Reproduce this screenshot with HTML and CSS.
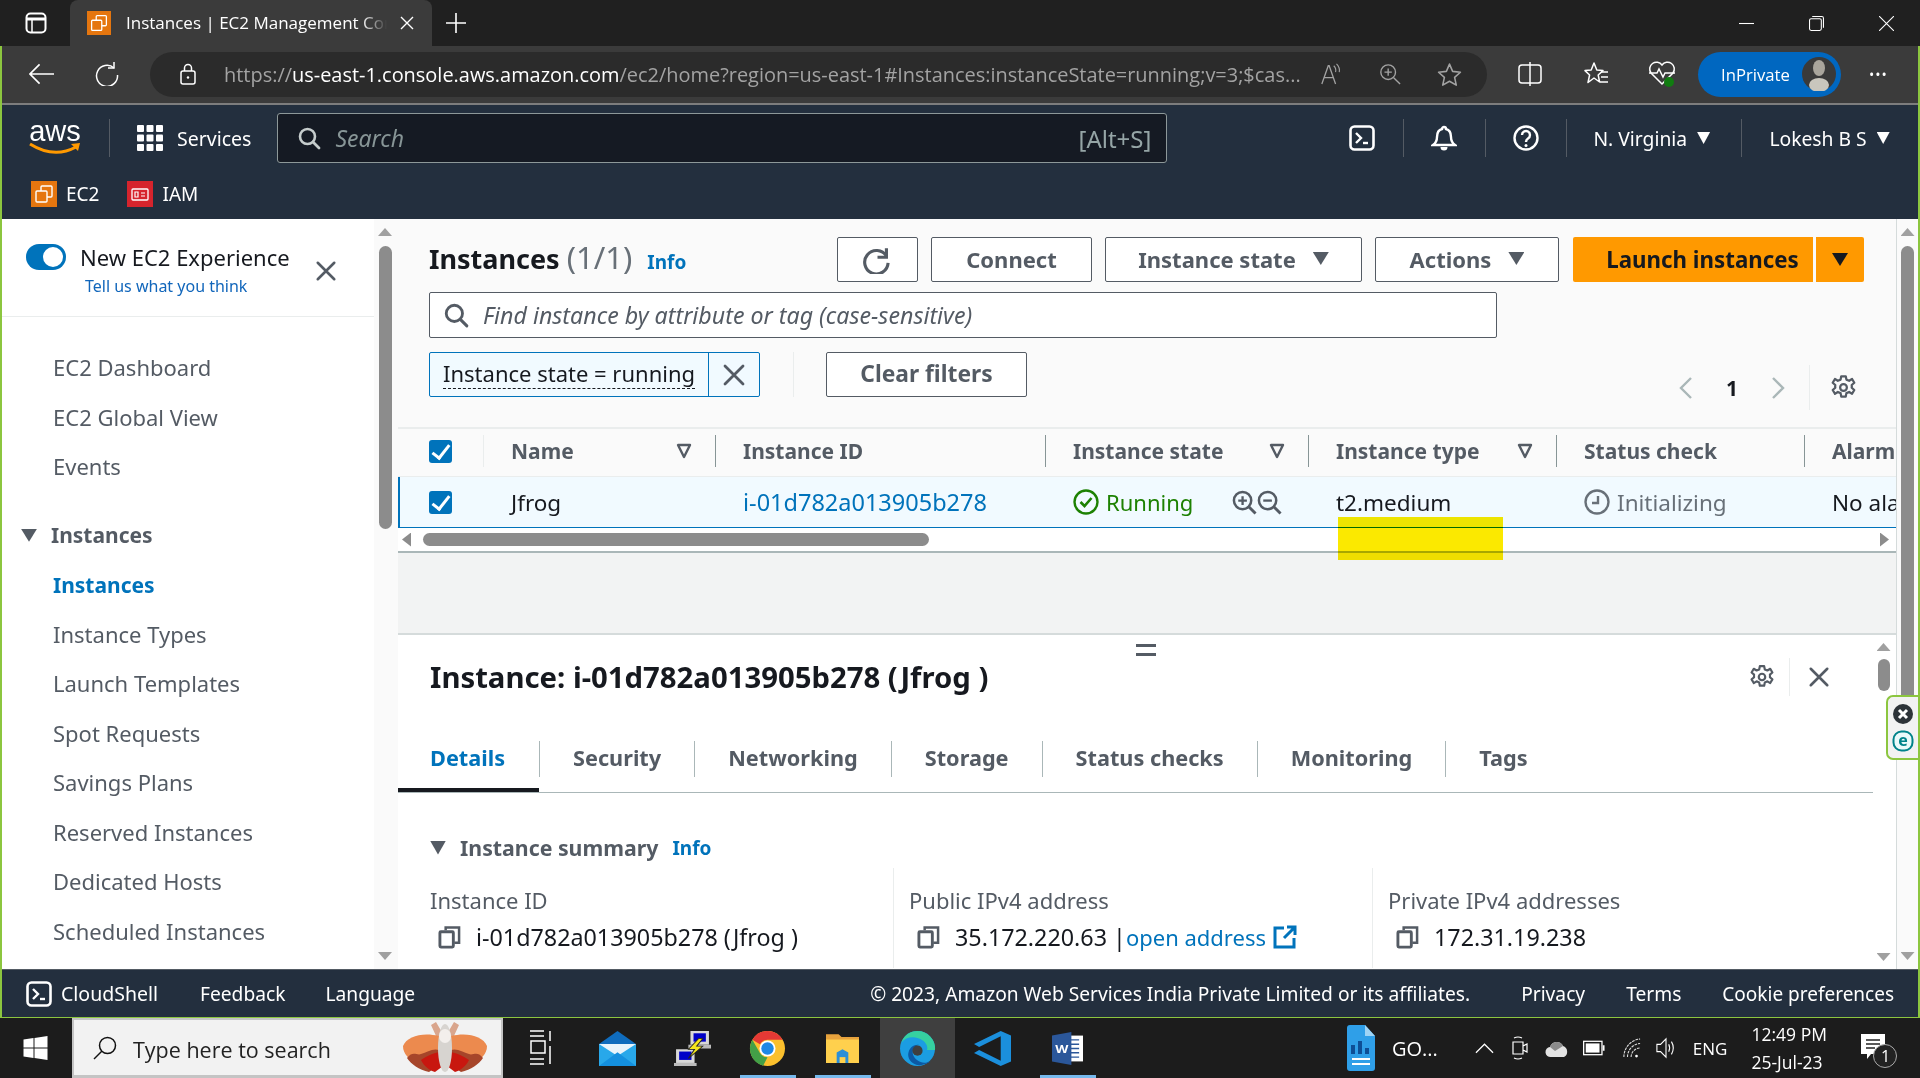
FILE: index.html
```html
<!DOCTYPE html>
<html lang="en">
<head>
    <meta charset="UTF-8">
    <title>Instances | EC2 Management Console</title>
    <link rel="stylesheet" href="styles.css">
</head>
<body>
    <svg class="sprite" xmlns="http://www.w3.org/2000/svg">
        <symbol id="i-ec2" viewBox="0 0 26 26">
            <rect width="26" height="26" fill="#e5760f"/>
            <rect x="10" y="5" width="11" height="11" rx="1" fill="none" stroke="#fff" stroke-width="1.4"/>
            <rect x="5" y="10" width="11" height="11" rx="1" fill="#e5760f" stroke="#fff" stroke-width="1.4"/>
        </symbol>
        <symbol id="i-search" viewBox="0 0 24 24">
            <circle cx="10.5" cy="10.5" r="7.5" fill="none" stroke="currentColor" stroke-width="2.6"/>
            <path d="M16 16l6 6" stroke="currentColor" stroke-width="2.8" stroke-linecap="round"/>
        </symbol>
        <symbol id="i-gear" viewBox="0 0 24 24">
            <path d="M10 2h4l.6 3 2.4 1 2.6-1.6 2 3.4-2.3 2a7 7 0 0 1 0 2.4l2.3 2-2 3.4-2.6-1.6-2.4 1-.6 3h-4l-.6-3-2.4-1-2.6 1.6-2-3.4 2.3-2a7 7 0 0 1 0-2.4l-2.3-2 2-3.4L7 6l2.4-1z" fill="none" stroke="currentColor" stroke-width="2" stroke-linejoin="round"/>
            <circle cx="12" cy="12" r="3" fill="none" stroke="currentColor" stroke-width="2"/>
        </symbol>
        <symbol id="i-close" viewBox="0 0 24 24">
            <path d="M3 3l18 18M21 3L3 21" stroke="currentColor" stroke-width="2.8" stroke-linecap="round"/>
        </symbol>
        <symbol id="i-copy" viewBox="0 0 24 24">
            <path d="M8 5V2h14v16h-5" fill="none" stroke="currentColor" stroke-width="2.6"/>
            <rect x="2" y="6.5" width="14" height="16" rx="1" fill="none" stroke="currentColor" stroke-width="3"/>
        </symbol>
        <symbol id="i-shell" viewBox="0 0 26 26">
            <rect x="1.5" y="1.5" width="23" height="23" rx="4" fill="none" stroke="#fff" stroke-width="2.6"/>
            <path d="M7 8l5 5-5 5" fill="none" stroke="#fff" stroke-width="2.4"/>
            <path d="M14 18h5" stroke="#fff" stroke-width="2.4"/>
        </symbol>
        <symbol id="i-filter" viewBox="0 0 16 16">
            <path d="M2 2h12l-6 12z" fill="none" stroke="#545b64" stroke-width="2.4" stroke-linejoin="round"/>
        </symbol>
    </svg>

    <div class="tabstrip">
        <svg class="tab-panel-icon" viewBox="0 0 22 22"><rect x="1.5" y="1.5" width="19" height="19" rx="4" fill="none" stroke="#fff" stroke-width="2"/><path d="M2 7h18" stroke="#fff" stroke-width="3"/><path d="M7 7v13" stroke="#fff" stroke-width="1.5"/></svg>
        <div class="tab">
            <svg class="tab-favicon"><use href="#i-ec2"/></svg>
            <span class="tab-title">Instances | EC2 Management Console</span>
            <svg class="tab-close" viewBox="0 0 14 14"><path d="M1 1l12 12M13 1L1 13" stroke="#fff" stroke-width="1.4"/></svg>
        </div>
        <svg class="tab-new" viewBox="0 0 22 22"><path d="M11 1v20M1 11h20" stroke="#fff" stroke-width="1.6"/></svg>
        <div class="win-controls">
            <svg viewBox="0 0 14 14"><path d="M0 7h14" stroke="#fff"/></svg>
            <svg viewBox="0 0 14 14"><rect x=".5" y="2.5" width="11" height="11" rx="1.5" fill="none" stroke="#fff"/><path d="M3 .5h9a1.5 1.5 0 0 1 1.5 1.5v9" fill="none" stroke="#fff"/></svg>
            <svg viewBox="0 0 14 14"><path d="M0 0l14 14M14 0L0 14" stroke="#fff"/></svg>
        </div>
    </div>

    <div class="frame">
        <div class="toolbar">
            <svg class="tool-back" viewBox="0 0 26 22"><path d="M11 1L1 11l10 10M1 11h25" fill="none" stroke="#fff" stroke-width="1.7"/></svg>
            <svg class="tool-reload" viewBox="0 0 24 24"><path d="M19 0v6h-6" fill="none" stroke="#fff" stroke-width="1.5"/><path d="M19 6A10.500 10.500 0 1 0 22.500 13" fill="none" stroke="#fff" stroke-width="1.5"/></svg>
            <div class="addressbar">
                <svg class="addr-lock" viewBox="0 0 16 22"><rect x="1" y="8" width="14" height="13" rx="2" fill="none" stroke="#fff" stroke-width="1.5"/><path d="M4.5 8V5a3.5 3.5 0 0 1 7 0v3" fill="none" stroke="#fff" stroke-width="1.5"/><circle cx="8" cy="14.5" r="1.2" fill="#fff"/></svg>
                <span class="addr-url">https://<b>us-east-1.console.aws.amazon.com</b>/ec2/home?region=us-east-1#Instances:instanceState=running;v=3;$cas...</span>
                <svg class="addr-read" viewBox="0 0 24 24"><path d="M2 23L9 3h1l7 20M5 16h10" fill="none" stroke="#a3a3a3" stroke-width="1.4"/><path d="M15 3q3 3 2 7M18 1q4 4 3 9" fill="none" stroke="#a3a3a3" stroke-width="1.2"/></svg>
                <svg class="addr-zoom" viewBox="0 0 24 24"><circle cx="10" cy="10" r="8" fill="none" stroke="#a3a3a3" stroke-width="1.5"/><path d="M16 16l7 7M10 6v8M6 10h8" stroke="#a3a3a3" stroke-width="1.5"/></svg>
                <svg class="addr-star" viewBox="0 0 24 24"><path d="M12 2l3 7 7.500 .8-5.600 5 1.600 7.400L12 18.500l-6.500 3.700 1.600-7.400-5.600-5L9 9z" fill="none" stroke="#a3a3a3" stroke-width="1.5" stroke-linejoin="round"/></svg>
            </div>
            <svg class="tool-split" viewBox="0 0 24 24"><rect x="1" y="3" width="22" height="18" rx="3" fill="none" stroke="#fff" stroke-width="1.5"/><path d="M12 0v24" stroke="#fff" stroke-width="1.5"/></svg>
            <svg class="tool-fav" viewBox="0 0 26 26"><path d="M11 2l2.800 7 6.200 .6-4.800 4.400 1.400 7L11 17l-6 4.500 1.600-7.500L2 9.600 8.200 9z" fill="none" stroke="#fff" stroke-width="1.500" stroke-linejoin="round"/><path d="M18 11h7M18 16h7M17 21h8" stroke="#fff" stroke-width="1.500"/></svg>
            <svg class="tool-health" viewBox="0 0 28 28"><path d="M14 24L3 13a6.500 6.500 0 0 1 11-8 6.500 6.500 0 0 1 11 8z" fill="none" stroke="#fff" stroke-width="1.500"/><path d="M1 13h8l2-4 4 8 2-4h10" fill="none" stroke="#fff" stroke-width="1.500"/><circle cx="21" cy="22" r="5" fill="#107c10"/></svg>
            <div class="inprivate">
                <span>InPrivate</span>
                <svg class="avatar" viewBox="0 0 34 34"><circle cx="17" cy="17" r="17" fill="#3a3a3a"/><ellipse cx="17" cy="11" rx="6" ry="8" fill="#a9a59c"/><ellipse cx="17" cy="28" rx="10" ry="7" fill="#c9c6bd"/></svg>
            </div>
            <span class="tool-more">&#8226;&#8226;&#8226;</span>
        </div>

        <header class="aws-header">
            <div class="aws-nav">
                <div class="aws-logo">
                    <span>aws</span>
                    <svg viewBox="0 0 52 14"><path d="M1 2q24 15 46 3" fill="none" stroke="#f90" stroke-width="3"/><path d="M42 2l9-1-2 8z" fill="#f90"/></svg>
                </div>
                <span class="nav-sep sep-logo"></span>
                <svg class="grid-icon" viewBox="0 0 26 26"><g fill="#fff"><rect width="7" height="7" rx="1"/><rect x="9.500" width="7" height="7" rx="1"/><rect x="19" width="7" height="7" rx="1"/><rect y="9.500" width="7" height="7" rx="1"/><rect x="9.500" y="9.500" width="7" height="7" rx="1"/><rect x="19" y="9.500" width="7" height="7" rx="1"/><rect y="19" width="7" height="7" rx="1"/><rect x="9.500" y="19" width="7" height="7" rx="1"/><rect x="19" y="19" width="7" height="7" rx="1"/></g></svg>
                <span class="services">Services</span>
                <div class="aws-search">
                    <svg class="aws-search-icon"><use href="#i-search"/></svg>
                    <span class="aws-search-text">Search</span>
                    <span class="aws-search-key">[Alt+S]</span>
                </div>
                <svg class="nav-icon shell-icon"><use href="#i-shell"/></svg>
                <span class="nav-sep"></span>
                <svg class="nav-icon bell-icon" viewBox="0 0 26 26"><path d="M13 2a2 2 0 0 1 2 2c4 1 5 4 5 8 0 4 1 6 4 8H2c3-2 4-4 4-8 0-4 1-7 5-8a2 2 0 0 1 2-2z" fill="none" stroke="#fff" stroke-width="2.400"/><path d="M9.500 22a3.500 3.500 0 0 0 7 0z" fill="#fff"/></svg>
                <span class="nav-sep"></span>
                <svg class="nav-icon help-icon" viewBox="0 0 26 26"><circle cx="13" cy="13" r="11.500" fill="none" stroke="#fff" stroke-width="2.400"/><path d="M9 10a4 4 0 1 1 6 3.500c-1.500 1-2 1.500-2 3.500" fill="none" stroke="#fff" stroke-width="2.400"/><circle cx="13" cy="20.500" r="1.500" fill="#fff"/></svg>
                <span class="nav-sep"></span>
                <span class="nav-menu region">N. Virginia<i class="tri tri-white"></i></span>
                <span class="nav-sep"></span>
                <span class="nav-menu account">Lokesh B S<i class="tri tri-white"></i></span>
            </div>
            <div class="aws-favs">
                <svg class="fav-icon"><use href="#i-ec2"/></svg>
                <span class="fav-ec2">EC2</span>
                <svg class="fav-icon" viewBox="0 0 26 26"><rect width="26" height="26" fill="#d6242d"/><rect x="5" y="8" width="16" height="11" rx="1" fill="none" stroke="#fff" stroke-width="1.300"/><path d="M8 11h3v5H8zM14 12h4M14 15h4" fill="none" stroke="#fff" stroke-width="1.200"/></svg>
                <span>IAM</span>
            </div>
        </header>

        <main class="console">
            <aside class="sidebar">
                <div class="side-panel">
                    <div class="side-head">
                        <div class="side-exp">
                            <span class="toggle"></span>
                            <span class="side-exp-title">New EC2 Experience</span>
                            <svg class="side-close"><use href="#i-close"/></svg>
                        </div>
                        <a class="side-feedback">Tell us what you think</a>
                    </div>
                    <ul class="side-nav">
                        <li>EC2 Dashboard</li>
                        <li>EC2 Global View</li>
                        <li>Events</li>
                        <li class="side-group"><i class="tri tri-gray"></i>Instances</li>
                        <li class="side-active">Instances</li>
                        <li>Instance Types</li>
                        <li>Launch Templates</li>
                        <li>Spot Requests</li>
                        <li>Savings Plans</li>
                        <li>Reserved Instances</li>
                        <li>Dedicated Hosts</li>
                        <li>Scheduled Instances</li>
                    </ul>
                </div>
                <div class="vbar side-bar">
                    <i class="arrow-up"></i>
                    <span class="vthumb"></span>
                    <i class="arrow-down"></i>
                </div>
            </aside>

            <section class="content">
                <div class="list-pane">
                    <div class="list-controls">
                        <div class="list-head">
                            <h1>Instances <span class="count">(1/1)</span> <a class="info">Info</a></h1>
                            <div class="actions">
                                <button class="btn btn-refresh"><svg viewBox="0 0 26 26"><path d="M21 3v8h-8" fill="none" stroke="#545b64" stroke-width="2.800"/><path d="M21 10a10.500 10.500 0 1 0 1.500 6" fill="none" stroke="#545b64" stroke-width="2.800"/></svg></button>
                                <button class="btn btn-connect">Connect</button>
                                <button class="btn btn-state">Instance state<i class="tri tri-gray"></i></button>
                                <button class="btn btn-actions">Actions<i class="tri tri-gray"></i></button>
                                <div class="launch">
                                    <button class="btn-launch">Launch instances</button>
                                    <button class="btn-launch-more"><i class="tri tri-dark"></i></button>
                                </div>
                            </div>
                        </div>
                        <div class="find">
                            <svg><use href="#i-search"/></svg>
                            <span>Find instance by attribute or tag (case-sensitive)</span>
                        </div>
                        <div class="filters">
                            <div class="token">
                                <span class="token-label"><u>Instance state = running</u></span>
                                <span class="token-x"><svg><use href="#i-close"/></svg></span>
                            </div>
                            <span class="filters-sep"></span>
                            <button class="btn btn-clear">Clear filters</button>
                            <div class="pager">
                                <svg viewBox="0 0 16 24"><path d="M13 2L3 12l10 10" fill="none" stroke="#aab7b8" stroke-width="2.400"/></svg>
                                <b>1</b>
                                <svg viewBox="0 0 16 24"><path d="M3 2l10 10L3 22" fill="none" stroke="#aab7b8" stroke-width="2.400"/></svg>
                                <span class="pager-sep"></span>
                                <svg class="pager-gear"><use href="#i-gear"/></svg>
                            </div>
                        </div>
                    </div>
                    <div class="table-wrap">
                        <div class="table-row table-head">
                            <div class="cell cell-check"><span class="check"></span></div>
                            <div class="cell">Name<svg class="col-filter"><use href="#i-filter"/></svg></div>
                            <div class="cell">Instance ID</div>
                            <div class="cell">Instance state<svg class="col-filter"><use href="#i-filter"/></svg></div>
                            <div class="cell">Instance type<svg class="col-filter"><use href="#i-filter"/></svg></div>
                            <div class="cell">Status check</div>
                            <div class="cell">Alarm status</div>
                        </div>
                        <div class="table-row table-body">
                            <div class="cell cell-check"><span class="check"></span></div>
                            <div class="cell">Jfrog</div>
                            <div class="cell"><a class="link id-link">i-01d782a013905b278</a></div>
                            <div class="cell state-cell">
                                <svg class="status-icon" viewBox="0 0 26 26"><circle cx="13" cy="13" r="11.500" fill="none" stroke="#1d8102" stroke-width="2.400"/><path d="M7.500 13l4 4 7-8" fill="none" stroke="#1d8102" stroke-width="2.600"/></svg>
                                <span class="running">Running</span>
                                <svg class="zoom-in" viewBox="0 0 26 26"><circle cx="11" cy="11" r="9" fill="none" stroke="#545b64" stroke-width="2.600"/><path d="M17.500 17.500l7 7" stroke="#545b64" stroke-width="3"/><path d="M11 6.500v9M6.500 11h9" stroke="#545b64" stroke-width="2.400"/></svg>
                                <svg class="zoom-out" viewBox="0 0 26 26"><circle cx="11" cy="11" r="9" fill="none" stroke="#545b64" stroke-width="2.600"/><path d="M17.500 17.500l7 7" stroke="#545b64" stroke-width="3"/><path d="M6.500 11h9" stroke="#545b64" stroke-width="2.400"/></svg>
                            </div>
                            <div class="cell">t2.medium</div>
                            <div class="cell muted">
                                <svg class="status-icon" viewBox="0 0 26 26"><circle cx="13" cy="13" r="11.500" fill="none" stroke="#687078" stroke-width="2.400"/><path d="M14 7v7H8" fill="none" stroke="#687078" stroke-width="2.400"/></svg>
                                Initializing
                            </div>
                            <div class="cell">No alarms</div>
                        </div>
                        <div class="hscroll">
                            <i class="arrow-left"></i>
                            <span class="hthumb"></span>
                            <i class="arrow-right"></i>
                        </div>
                    </div>
                    <span class="scribble"></span>
                </div>

                <div class="split-pane">
                    <div class="split-main">
                        <div class="split-handle"></div>
                        <div class="split-head">
                            <h2>Instance: i-01d782a013905b278 (Jfrog )</h2>
                            <svg class="split-gear"><use href="#i-gear"/></svg>
                            <span class="split-sep"></span>
                            <svg class="split-close"><use href="#i-close"/></svg>
                        </div>
                        <nav class="tabs">
                            <a class="tab-item tab-active">Details</a>
                            <a class="tab-item">Security</a>
                            <a class="tab-item">Networking</a>
                            <a class="tab-item">Storage</a>
                            <a class="tab-item">Status checks</a>
                            <a class="tab-item">Monitoring</a>
                            <a class="tab-item">Tags</a>
                        </nav>
                        <div class="summary-title"><i class="tri tri-gray"></i><b>Instance summary</b><a class="info">Info</a></div>
                        <div class="summary">
                            <div class="field">
                                <span class="field-label">Instance ID</span>
                                <span class="field-value"><svg><use href="#i-copy"/></svg>i-01d782a013905b278 (Jfrog )</span>
                            </div>
                            <div class="field">
                                <span class="field-label">Public IPv4 address</span>
                                <span class="field-value"><svg><use href="#i-copy"/></svg>35.172.220.63 |<a class="link">open address</a>
                                    <svg class="ext-icon" viewBox="0 0 24 24"><path d="M11 3H2v19h19v-9" fill="none" stroke="#0073bb" stroke-width="3"/><path d="M14 2h8v8M22 2L11 13" fill="none" stroke="#0073bb" stroke-width="3"/></svg>
                                </span>
                            </div>
                            <div class="field">
                                <span class="field-label">Private IPv4 addresses</span>
                                <span class="field-value"><svg><use href="#i-copy"/></svg>172.31.19.238</span>
                            </div>
                        </div>
                    </div>
                    <div class="vbar split-bar">
                        <i class="arrow-up"></i>
                        <span class="vthumb"></span>
                        <i class="arrow-down"></i>
                    </div>
                </div>
            </section>

            <div class="vbar page-bar">
                <i class="arrow-up"></i>
                <span class="vthumb"></span>
                <i class="arrow-down"></i>
            </div>

            <div class="ext-tab">
                <svg viewBox="0 0 22 22"><circle cx="11" cy="11" r="10" fill="#2d3338"/><path d="M7 7l8 8M15 7l-8 8" stroke="#fff" stroke-width="3"/></svg>
                <svg viewBox="0 0 22 22"><rect x="1.500" y="1.500" width="19" height="19" rx="8" fill="#eafafa" stroke="#00838a" stroke-width="2"/><text x="11" y="16" text-anchor="middle" font-size="16" font-weight="700" font-family="Noto Sans" fill="#00838a">e</text></svg>
            </div>
        </main>

        <footer class="aws-footer">
            <svg class="foot-shell"><use href="#i-shell"/></svg>
            <span class="foot-cloud">CloudShell</span>
            <span class="foot-feedback">Feedback</span>
            <span class="foot-lang">Language</span>
            <span class="foot-copy">&copy; 2023, Amazon Web Services India Private Limited or its affiliates.</span>
            <span class="foot-privacy">Privacy</span>
            <span class="foot-terms">Terms</span>
            <span class="foot-cookie">Cookie preferences</span>
        </footer>
    </div>

    <div class="taskbar">
        <svg class="start" viewBox="0 0 24 24"><path d="M0 3.500L10 2v9.500H0zM11 1.900L24 0v11.500H11zM0 12.500h10V22L0 20.500zM11 12.500h13V24l-13-1.900z" fill="#fff"/></svg>
        <div class="task-search">
            <svg viewBox="0 0 24 24"><circle cx="14.500" cy="9.500" r="8" fill="none" stroke="#111" stroke-width="1.500"/><path d="M9 15l-8 8" stroke="#111" stroke-width="1.500"/></svg>
            <span>Type here to search</span>
            <svg class="moth" viewBox="0 0 84 52">
                <path d="M40 12L33 0l-5 3 6 13zM44 12l7-12 5 3-6 13z" fill="#d9a58c"/>
                <path d="M36 14C20 10 4 14 0 24c0 8 6 14 14 16 10-2 20-8 24-14z" fill="#ec8a4e"/>
                <path d="M48 14c16-4 32 0 36 10 0 8-6 14-14 16-10-2-20-8-24-14z" fill="#ec8a4e"/>
                <path d="M4 36c6-8 10-2 14-4 6-2 12-6 18-4l2 14-12 8c-10-2-18-8-22-14z" fill="#a6452a"/>
                <path d="M80 36c-6-8-10-2-14-4-6-2-12-6-18-4l-2 14 12 8c10-2 18-8 22-14z" fill="#a6452a"/>
                <path d="M18 38c6-4 14-8 20-8l2 14-8 6c-6-2-11-6-14-12zM66 38c-6-4-14-8-20-8l-2 14 8 6c6-2 11-6 14-12z" fill="#c8170f"/>
                <ellipse cx="42" cy="26" rx="7" ry="24" fill="#d7d4d0"/>
                <ellipse cx="42" cy="14" rx="6" ry="7" fill="#f3efec"/>
            </svg>
        </div>
        <svg class="task-view" viewBox="0 0 24 40"><path d="M2 3h14M2 8h14M3 13h14v12H3zM2 31h14M2 36h14M22 3v10M22 18v18" fill="none" stroke="#fff" stroke-width="1.500"/></svg>
        <div class="task-app app-mail">
            <svg viewBox="0 0 36 46" preserveAspectRatio="none"><path d="M18 0L36 17v29H0V17z" fill="#0f6cbd"/><path d="M0 17h36v29H0z" fill="#28a8ea"/><path d="M0 17l18 16 18-16z" fill="#e8f4fb"/><path d="M0 46L18 28l18 18z" fill="#1490df"/></svg>
        </div>
        <div class="task-app">
            <svg viewBox="0 0 36 46" preserveAspectRatio="none"><rect x="16" y="0" width="18" height="18" fill="#d8d8d8"/><rect x="19" y="3" width="12" height="11" fill="#0000c8"/><rect x="14" y="18" width="22" height="5" fill="#bbb"/><rect x="2" y="24" width="18" height="18" fill="#d8d8d8"/><rect x="5" y="27" width="12" height="11" fill="#0000c8"/><rect x="0" y="42" width="22" height="4" fill="#bbb"/><path d="M24 10L14 24h6l-6 12 14-16h-6l6-10z" fill="#f7e81c" stroke="#222"/></svg>
        </div>
        <div class="task-app task-on">
            <svg viewBox="0 0 48 48"><circle cx="24" cy="24" r="24" fill="#fbc02d"/><path d="M24 0a24 24 0 0 1 20.800 12H24a12 12 0 0 0-10.400 6L3.200 12A24 24 0 0 1 24 0z" fill="#e53935"/><path d="M3.200 12l10.400 18A12 12 0 0 0 24 36l-6 11.500A24 24 0 0 1 3.200 12z" fill="#43a047"/><circle cx="24" cy="24" r="11" fill="#fff"/><circle cx="24" cy="24" r="8.500" fill="#1e88e5"/></svg>
        </div>
        <div class="task-app task-on app-files">
            <svg viewBox="0 0 34 46" preserveAspectRatio="none"><path d="M0 2h13l3 4h18v8H0z" fill="#e8a33d"/><path d="M0 10h34v36H0z" fill="#ffd04d"/><path d="M11 30l6-5 6 5v16H11z" fill="#2a8fd8"/><rect x="14" y="37" width="6" height="9" fill="#ffd04d"/></svg>
        </div>
        <div class="task-app task-active">
            <svg viewBox="0 0 48 48"><circle cx="24" cy="24" r="24" fill="#1b9de2"/><path d="M48 26A24 24 0 0 0 24 0C14 0 5 6 2 16c5-7 15-9 23-6 9 3 14 10 12 16z" fill="#36d0a0"/><path d="M32 46C20 50 8 40 12 28c2-6 8-10 14-9-7 2-10 8-8 14 3 8 14 14 24 8-3 3-6 4-10 5z" fill="#0c59a4"/><circle cx="24" cy="27" r="7" fill="#3f3f3f"/></svg>
        </div>
        <div class="task-app">
            <svg viewBox="0 0 36 46" preserveAspectRatio="none"><path d="M26 0l10 6v34l-10 6L0 29l5-4 21 14V7L5 21 0 17z" fill="#1b8fdc"/></svg>
        </div>
        <div class="task-app task-on app-word">
            <svg viewBox="0 0 32 46" preserveAspectRatio="none"><rect x="12" y="5" width="20" height="36" fill="#fff"/><path d="M16 11h12M16 17h12M16 23h12M16 29h12M16 35h12" stroke="#2b579a" stroke-width="2"/><path d="M0 5l20-5v46L0 41z" fill="#2b579a"/><text x="10" y="29" text-anchor="middle" font-size="14" font-weight="700" font-family="Noto Sans" fill="#fff">W</text></svg>
        </div>
        <div class="task-doc">
            <svg viewBox="0 0 28 46"><path d="M3 0h15l10 11v32a3 3 0 0 1-3 3H3a3 3 0 0 1-3-3V3a3 3 0 0 1 3-3z" fill="#2f9fe8"/><path d="M18 0l10 11H18z" fill="#9fd4f5"/><path d="M6 20v9M13 16v13M20 23v6" stroke="#0e4f96" stroke-width="4"/><path d="M5 34h18M5 39h18" stroke="#fff" stroke-width="2"/></svg>
            <span>GO...</span>
        </div>
        <div class="tray">
            <svg class="tray-up" viewBox="0 0 20 12"><path d="M1 11l9-9 9 9" fill="none" stroke="#fff" stroke-width="1.300"/></svg>
            <svg class="tray-meet" viewBox="0 0 16 24"><path d="M1 6h10v12H1zM11 10l4-2v8l-4-2M2 2q4-2 8 0M2 22q4 2 8 0" fill="none" stroke="#fff" stroke-width="1.200"/></svg>
            <svg class="tray-cloud" viewBox="0 0 24 20"><path d="M6 19a5 5 0 0 1-1-10 7 7 0 0 1 13-1 6 6 0 0 1 1 11z" fill="#e3e3e3"/><path d="M5 9a7 7 0 0 1 13-1l-8 5z" fill="#8a8a8a"/></svg>
            <svg class="tray-batt" viewBox="0 0 24 16"><rect x=".7" y=".7" width="20" height="14.600" fill="none" stroke="#fff" stroke-width="1.400"/><rect x="3" y="3" width="15" height="10" fill="#fff"/><rect x="21.500" y="5" width="2" height="6" fill="#fff"/></svg>
            <svg class="tray-wifi" viewBox="0 0 20 22"><path d="M1 21A20 20 0 0 1 19 1M5 21A15 15 0 0 1 19 6M9 21a10 10 0 0 1 10-10" fill="none" stroke="#ddd" stroke-width="1.200" stroke-dasharray="3 1"/><circle cx="15" cy="20" r="1.500" fill="#fff"/></svg>
            <svg class="tray-vol" viewBox="0 0 22 24"><path d="M1 8h4l6-6v20l-6-6H1z" fill="none" stroke="#fff" stroke-width="1.200"/><path d="M14 8q2 4 0 8M17 5q4 7 0 14" fill="none" stroke="#fff" stroke-width="1.200"/></svg>
            <span class="tray-lang">ENG</span>
            <div class="clock"><span>12:49 PM</span><span>25-Jul-23</span></div>
            <div class="notif">
                <svg viewBox="0 0 24 28"><path d="M0 0h24v20H10l-4 5v-5H0z" fill="#fff"/><path d="M5 6h14M5 10h14M5 14h9" stroke="#222" stroke-width="1.300"/></svg>
                <span class="notif-count">1</span>
            </div>
        </div>
    </div>
</body>
</html>
```

FILE: styles.css
```css
:root {
    --green: #8cc63f;
    --navy: #232f3e;
    --gray: #545b64;
    --ink: #16191f;
    --blue: #0073bb;
    --line: #eaeded;
    --barcolor: #8c8c8c;
}
* {
    box-sizing: border-box;
}
html, body {
    margin: 0;
    height: 100%;
}
body {
    width: 1920px;
    height: 1078px;
    overflow: hidden;
    display: flex;
    flex-direction: column;
    font-family: "Noto Sans", sans-serif;
    font-size: 22px;
    color: var(--ink);
    background: #1c1c1c;
}
h1, h2, ul {
    margin: 0;
    padding: 0;
}
i {
    display: block;
    flex: none;
}
svg {
    display: block;
    flex: none;
}
.sprite {
    display: none;
}

/* triangles */
.tri {
    width: 16px;
    height: 13px;
    clip-path: polygon(0 0, 100% 0, 50% 100%);
}
.tri-white { background: #fff; }
.tri-gray { background: var(--gray); }
.tri-dark { background: var(--ink); }

/* browser tabs */
.tabstrip {
    height: 46px;
    flex: none;
    display: flex;
    align-items: center;
    background: #202020;
    font-family: "Open Sans", sans-serif;
    color: #fff;
}
.tab-panel-icon {
    width: 22px;
    height: 22px;
    margin-left: 25px;
}
.tab {
    width: 362px;
    height: 46px;
    margin-left: 23px;
    padding-left: 17px;
    display: flex;
    align-items: center;
    background: #3b3b3b;
    border-radius: 8px 8px 0 0;
}
.tab-favicon {
    width: 24px;
    height: 24px;
}
.tab-title {
    width: 261px;
    margin-left: 15px;
    padding-bottom: 2px;
    font-size: 17px;
    white-space: nowrap;
    overflow: hidden;
    -webkit-mask-image: linear-gradient(to right, #000 90%, transparent);
    mask-image: linear-gradient(to right, #000 90%, transparent);
}
.tab-close {
    width: 14px;
    height: 14px;
    margin-left: 13px;
}
.tab-new {
    width: 22px;
    height: 22px;
    margin-left: 13px;
}
.win-controls {
    margin-left: auto;
    padding-right: 26px;
    display: flex;
    gap: 55px;
}
.win-controls svg {
    width: 15px;
    height: 15px;
}

/* frame with the green edge */
.frame {
    height: 972px;
    flex: none;
    display: flex;
    flex-direction: column;
    border-left: 2px solid var(--green);
    border-right: 2px solid var(--green);
    border-bottom: 2px solid var(--green);
}

/* browser toolbar */
.toolbar {
    height: 59px;
    flex: none;
    display: flex;
    align-items: center;
    background: #3b3b3b;
    border-bottom: 2px solid #7d7d7d;
    padding-bottom: 7px;
    padding-top: 6px;
    color: #fff;
    font-family: "Open Sans", sans-serif;
}
.tool-back {
    width: 25px;
    height: 22px;
    margin-left: 27px;
}
.tool-reload {
    width: 24px;
    height: 24px;
    margin-left: 41px;
}
.addressbar {
    width: 1337px;
    height: 45px;
    margin-left: 31px;
    display: flex;
    align-items: center;
    background: #2b2b2b;
    border-radius: 23px;
}
.addr-lock {
    width: 16px;
    height: 22px;
    margin-left: 30px;
}
.addr-url {
    width: 1079px;
    margin-left: 28px;
    font-size: 19.950px;
    color: #a3a3a3;
    white-space: nowrap;
    overflow: hidden;
}
.addr-url b {
    font-weight: 400;
    color: #fff;
}
.addr-read {
    width: 22px;
    height: 24px;
    margin-left: 17px;
}
.addr-zoom {
    width: 22px;
    height: 22px;
    margin-left: 37px;
}
.addr-star {
    width: 25px;
    height: 25px;
    margin-left: 36px;
}
.tool-split {
    width: 24px;
    height: 24px;
    margin-left: 31px;
}
.tool-fav {
    width: 26px;
    height: 26px;
    margin-left: 41px;
}
.tool-health {
    width: 28px;
    height: 28px;
    margin-left: 39px;
}
.inprivate {
    width: 143px;
    height: 45px;
    margin-left: 22px;
    display: flex;
    align-items: center;
    padding-left: 23px;
    background: #0067c0;
    border-radius: 23px;
    font-size: 16.700px;
}
.avatar {
    width: 34px;
    height: 34px;
    margin-left: auto;
    margin-right: 5px;
}
.tool-more {
    margin-left: 28px;
    font-size: 14px;
    letter-spacing: 1px;
}

/* aws header */
.aws-header {
    height: 114px;
    flex: none;
    background: var(--navy);
    color: #fff;
}
.aws-nav {
    height: 66px;
    display: flex;
    align-items: center;
}
.aws-logo {
    width: 52px;
    margin-left: 27px;
    font-family: "Liberation Sans", sans-serif;
    font-size: 29px;
    line-height: 22px;
    text-align: center;
}
.aws-logo svg {
    width: 52px;
    height: 14px;
}
.nav-sep {
    width: 1px;
    height: 38px;
    background: #545b64;
}
.sep-logo {
    margin-left: 28px;
}
.grid-icon {
    width: 26px;
    height: 26px;
    margin-left: 27px;
}
.services {
    margin-left: 14px;
    font-size: 19.500px;
}
.aws-search {
    width: 890px;
    height: 50px;
    margin-left: 26px;
    padding: 0 15px 0 19px;
    display: flex;
    align-items: center;
    background: #151a23;
    border: 1px solid #8d9899;
    border-radius: 3px;
}
.aws-search-icon {
    width: 24px;
    height: 24px;
    color: #c5cccc;
}
.aws-search-text {
    margin-left: 14px;
    font-size: 23px;
    font-style: italic;
    color: #879596;
}
.aws-search-key {
    margin-left: auto;
    font-size: 24px;
    color: #95a5a6;
}
.nav-icon {
    width: 26px;
    height: 26px;
}
.shell-icon {
    margin-left: 182px;
    margin-right: 28px;
}
.bell-icon {
    margin: 0 28px 0 27px;
}
.help-icon {
    margin: 0 27px;
}
.nav-menu {
    display: flex;
    align-items: center;
    font-size: 19.300px;
}
.region {
    width: 174px;
    padding-left: 26px;
}
.account {
    padding-left: 27px;
}
.nav-menu .tri {
    width: 13px;
    height: 12px;
    margin-left: 10px;
}
.aws-favs {
    height: 48px;
    display: flex;
    align-items: center;
    font-size: 19px;
    padding-left: 29px;
    padding-bottom: 3px;
}
.fav-icon {
    width: 26px;
    height: 26px;
}
.aws-favs span {
    margin-left: 9px;
}
.aws-favs .fav-ec2 {
    margin-right: 28px;
}

/* console body */
.console {
    height: 750px;
    flex: none;
    position: relative;
    display: flex;
    background: #fafafa;
}

/* scrollbars */
.vbar {
    flex: none;
    display: flex;
    flex-direction: column;
    align-items: center;
}
.vthumb {
    background: var(--barcolor);
    border-radius: 7px;
}
.arrow-up, .arrow-down {
    width: 14px;
    height: 8px;
    background: #a0a0a0;
}
.arrow-up {
    clip-path: polygon(50% 0, 100% 100%, 0 100%);
}
.arrow-down {
    margin-top: auto;
    clip-path: polygon(0 0, 100% 0, 50% 100%);
}

/* sidebar */
.sidebar {
    width: 396px;
    flex: none;
    display: flex;
    background: #fafafa;
}
.side-panel {
    width: 372px;
    flex: none;
    background: #fff;
    overflow: hidden;
}
.side-head {
    height: 98px;
    padding: 20px 0 0 24px;
    border-bottom: 1px solid var(--line);
}
.side-exp {
    display: flex;
    align-items: center;
    height: 36px;
}
.toggle {
    width: 40px;
    height: 26px;
    flex: none;
    background: var(--blue);
    border-radius: 13px;
    display: flex;
    justify-content: flex-end;
    align-items: center;
    padding-right: 3px;
}
.toggle::after {
    content: "";
    width: 20px;
    height: 20px;
    background: #fff;
    border-radius: 50%;
}
.side-exp-title {
    margin-left: 14px;
    white-space: nowrap;
    font-size: 22px;
}
.side-close {
    width: 22px;
    height: 22px;
    margin-left: 25px;
    margin-top: 28px;
    color: var(--gray);
}
.side-feedback {
    display: block;
    margin: 0 0 0 59px;
    font-size: 16px;
    color: #1166bb;
}
.side-nav {
    list-style: none;
    padding-top: 26px;
}
.side-nav li {
    height: 49.500px;
    padding-left: 51px;
    line-height: 49.500px;
    color: var(--gray);
    white-space: nowrap;
}
.side-nav .side-group {
    margin-top: 19px;
    padding-left: 19px;
    display: flex;
    align-items: center;
    gap: 14px;
    font-size: 21px;
    font-weight: 700;
}
.side-nav .side-active {
    padding-top: 1px;
    font-size: 21px;
    font-weight: 700;
    color: var(--blue);
}
.side-bar {
    width: 22px;
    margin-right: 2px;
    padding-top: 9px;
    padding-bottom: 9px;
}
.side-bar .vthumb {
    width: 13px;
    height: 283px;
    margin-top: 10px;
}

/* main list */
.content {
    width: 1499px;
    flex: none;
    display: flex;
    flex-direction: column;
    border-right: 1px solid #d5dbdb;
}
.list-pane {
    height: 414px;
    flex: none;
    position: relative;
    background: #f2f3f3;
    overflow: visible;
}
.list-controls {
    height: 208px;
    padding: 18px 32px 0 31px;
    background: #fafafa;
}
.list-head {
    display: flex;
    align-items: center;
    height: 45px;
}
.list-head h1 {
    font-size: 27px;
    font-weight: 700;
    white-space: nowrap;
    padding-bottom: 6px;
}
.count {
    font-size: 31px;
    font-weight: 400;
    color: #687078;
}
.info {
    margin-left: 6px;
    font-size: 19px;
    font-weight: 700;
    color: var(--blue);
}
.list-head .info {
    margin-left: 8px;
}
.actions {
    margin-left: auto;
    display: flex;
    gap: 13px;
}
.btn {
    height: 45px;
    display: flex;
    align-items: center;
    justify-content: center;
    background: #fff;
    border: 1px solid var(--gray);
    border-radius: 2px;
    color: var(--gray);
    font-family: inherit;
    font-size: 22px;
    font-weight: 700;
    padding: 0 0 2px;
}
.btn-refresh { width: 81px; padding: 0; }
.btn-refresh svg {
    width: 29px;
    height: 29px;
}
.btn-connect { width: 161px; }
.btn-state { width: 257px; }
.btn-actions { width: 184px; }
.btn .tri {
    margin-left: 17px;
}
.launch {
    margin-left: 1px;
    display: flex;
    gap: 3px;
}
.btn-launch, .btn-launch-more {
    height: 45px;
    border: 0;
    padding: 0;
    background: #f90;
    color: var(--ink);
    font-family: inherit;
    font-size: 22.300px;
    font-weight: 700;
    display: flex;
    align-items: center;
    justify-content: center;
}
.btn-launch {
    width: 240px;
    padding-left: 19px;
    border-radius: 2px 0 0 2px;
}
.btn-launch-more {
    width: 48px;
    border-radius: 0 2px 2px 0;
}
.find {
    width: 1068px;
    height: 46px;
    margin-top: 10px;
    padding-left: 13px;
    padding-bottom: 1px;
    display: flex;
    align-items: center;
    background: #fff;
    border: 1px solid var(--gray);
    border-radius: 2px;
    color: var(--gray);
    font-size: 23.200px;
    font-style: italic;
}
.find svg {
    width: 26px;
    height: 26px;
}
.find span {
    margin-left: 14px;
}
.filters {
    display: flex;
    align-items: flex-start;
    margin-top: 14px;
}
.token {
    width: 331px;
    height: 45px;
    display: flex;
    background: #f1faff;
    border: 1px solid var(--blue);
    border-radius: 2px;
}
.token-label {
    width: 279px;
    padding-left: 13px;
    line-height: 40px;
    white-space: nowrap;
    font-size: 22px;
    border-right: 1px solid var(--blue);
}
.token-label u {
    text-decoration: none;
    border-bottom: 1px dashed var(--ink);
}
.token-x {
    flex: 1;
    display: flex;
    align-items: center;
    justify-content: center;
    color: var(--gray);
}
.token-x svg {
    width: 24px;
    height: 24px;
}
.filters-sep {
    width: 1px;
    height: 45px;
    margin-left: 33px;
    background: var(--line);
}
.btn-clear {
    width: 201px;
    margin-left: 32px;
    font-size: 22.800px;
}
.pager {
    margin-left: auto;
    margin-top: 13px;
    height: 45px;
    display: flex;
    align-items: center;
    color: var(--ink);
}
.pager svg {
    width: 16px;
    height: 26px;
}
.pager b {
    width: 76px;
    text-align: center;
    font-size: 21px;
}
.pager-sep {
    width: 1px;
    height: 45px;
    margin-left: 23px;
    background: var(--line);
}
.pager .pager-gear {
    width: 27px;
    height: 27px;
    margin-left: 20px;
    margin-right: 7px;
    color: var(--gray);
}

/* table */
.table-wrap {
    height: 126px;
    background: #fff;
    border-bottom: 2px solid #aab7b8;
    overflow: hidden;
}
.table-row {
    display: grid;
    grid-template-columns: 86px 232px 330px 263px 248px 248px 292px;
    width: 1499px;
}
.table-head {
    height: 50px;
    background: #fafafa;
    border-top: 2px solid var(--line);
    border-bottom: 1px solid var(--line);
    font-weight: 700;
    font-size: 21px;
    color: var(--gray);
}
.table-body {
    height: 51px;
    background: #f1faff;
    border-bottom: 1px solid var(--blue);
    box-shadow: inset 2px 0 0 var(--blue);
    font-size: 22.500px;
}
.cell {
    display: flex;
    align-items: center;
    padding-left: 27px;
    white-space: nowrap;
}
.cell-check {
    padding-left: 31px;
}
.table-head .cell {
    position: relative;
    margin: 6px 0 9px;
    height: 32px;
}
.table-head .cell::after {
    content: "";
    position: absolute;
    right: 0;
    top: 0;
    height: 32px;
    border-right: 1px solid #879596;
}
.table-head .cell-check::after {
    border-right-color: var(--line);
}
.col-filter {
    width: 16px;
    height: 16px;
    margin-left: auto;
    margin-right: 24px;
}
.check {
    width: 23px;
    height: 23px;
    background: var(--blue);
    border-radius: 3px;
    display: flex;
    align-items: center;
    justify-content: center;
}
.check::after {
    content: "";
    width: 7px;
    height: 15px;
    margin-top: -3px;
    border: solid #fff;
    border-width: 0 3px 3px 0;
    transform: rotate(38deg);
}
.link {
    color: var(--blue);
}
.id-link {
    font-size: 23.500px;
}
.status-icon {
    width: 26px;
    height: 26px;
    margin-right: 7px;
}
.running {
    font-size: 22px;
    color: #1d8102;
}
.state-cell svg:nth-of-type(2) {
    margin-left: 39px;
}
.zoom-in, .zoom-out {
    width: 25px;
    height: 25px;
}
.muted {
    color: #687078;
}
.hscroll {
    height: 23px;
    display: flex;
    align-items: center;
    padding-left: 4px;
}
.arrow-left, .arrow-right {
    width: 9px;
    height: 14px;
    background: #8c8c8c;
}
.arrow-left {
    clip-path: polygon(100% 0, 100% 100%, 0 50%);
}
.arrow-right {
    margin-left: auto;
    margin-right: 7px;
    clip-path: polygon(0 0, 100% 50%, 0 100%);
}
.hthumb {
    width: 506px;
    height: 13px;
    margin-left: 12px;
    background: var(--barcolor);
    border-radius: 7px;
}
.scribble {
    position: absolute;
    left: 940px;
    top: 298px;
    width: 165px;
    height: 43px;
    background: #fbe900;
    mix-blend-mode: multiply;
}

/* split panel */
.split-pane {
    height: 336px;
    flex: none;
    display: flex;
    background: #fff;
    border-top: 2px solid #d5dbdb;
}
.split-main {
    width: 1475px;
    flex: none;
    overflow: hidden;
}
.split-handle {
    width: 20px;
    height: 12px;
    margin: 9px 0 0 738px;
    border-top: 3px solid var(--gray);
    border-bottom: 3px solid var(--gray);
}
.split-head {
    height: 42px;
    padding-left: 32px;
    display: flex;
    align-items: center;
}
.split-head h2 {
    font-size: 29.300px;
    font-weight: 700;
    white-space: nowrap;
}
.split-gear {
    width: 26px;
    height: 26px;
    margin-left: auto;
    color: var(--gray);
}
.split-sep {
    width: 1px;
    height: 38px;
    margin-left: 14px;
    background: var(--line);
}
.split-close {
    width: 22px;
    height: 22px;
    margin-left: 18px;
    margin-right: 43px;
    color: var(--gray);
}
.tabs {
    height: 52px;
    margin-top: 43px;
    display: flex;
    align-items: flex-start;
    border-bottom: 1px solid #aab7b8;
    width: 1475px;
}
.tab-item {
    height: 36px;
    padding: 0 33px;
    border-left: 1px solid #aab7b8;
    font-size: 21.700px;
    font-weight: 700;
    line-height: 34px;
    color: var(--gray);
    white-space: nowrap;
    position: relative;
}
.tab-active {
    width: 141px;
    padding: 0 0 0 32px;
    border-left: 0;
    color: var(--blue);
}
.tab-active::after {
    content: "";
    position: absolute;
    left: 0;
    right: 0;
    top: 47px;
    height: 4px;
    background: var(--ink);
}
.summary-title {
    margin-top: 40px;
    padding-left: 32px;
    display: flex;
    align-items: center;
    font-size: 21.300px;
    color: var(--gray);
}
.summary-title .tri {
    width: 16px;
    height: 14px;
    margin-right: 14px;
}
.summary-title .info {
    margin-left: 14px;
}
.summary {
    display: grid;
    grid-template-columns: 494px 479px 478px;
    margin-top: 6px;
    padding-left: 1px;
}
.field {
    height: 100px;
    padding: 15px 0 0 15px;
    border-left: 1px solid var(--line);
}
.field:first-child {
    padding-left: 31px;
    border-left: 0;
}
.field-label {
    display: block;
    font-size: 22px;
    line-height: 34px;
    color: var(--gray);
}
.field-value {
    margin-top: 3px;
    display: flex;
    align-items: center;
    white-space: nowrap;
    font-size: 23.300px;
    line-height: 34px;
}
.field-value .link {
    font-size: 22px;
}
.field-value > svg:first-child {
    width: 23px;
    height: 24px;
    margin: 0 15px 0 8px;
    color: var(--gray);
}
.ext-icon {
    width: 24px;
    height: 24px;
    margin-left: 7px;
}
.split-bar {
    width: 21px;
    padding: 8px 0;
}
.split-bar .vthumb {
    width: 12px;
    height: 32px;
    margin-top: 8px;
}

/* outer page scrollbar */
.page-bar {
    width: 21px;
    flex: none;
    padding: 9px 0;
}
.page-bar .vthumb {
    width: 13px;
    height: 470px;
    margin-top: 10px;
}
.ext-tab {
    position: absolute;
    right: 0;
    top: 476px;
    width: 32px;
    height: 65px;
    display: flex;
    flex-direction: column;
    align-items: center;
    gap: 5px;
    padding-top: 6px;
    background: #f2f2f2;
    border: 2px solid var(--green);
    border-right: 0;
    border-radius: 7px 0 0 7px;
}
.ext-tab svg {
    width: 22px;
    height: 22px;
}

/* aws footer */
.aws-footer {
    height: 48px;
    flex: none;
    display: flex;
    align-items: center;
    padding-left: 24px;
    background: var(--navy);
    border-top: 1px solid #545b64;
    color: #fff;
    font-size: 19.200px;
    white-space: nowrap;
}
.foot-shell {
    width: 26px;
    height: 26px;
}
.foot-cloud {
    margin-left: 9px;
    font-size: 19.500px;
}
.foot-feedback {
    margin-left: 42px;
}
.foot-lang {
    margin-left: 40px;
}
.foot-copy {
    margin-left: 455px;
}
.foot-privacy {
    margin-left: 51px;
}
.foot-terms {
    margin-left: 41px;
}
.foot-cookie {
    margin-left: 41px;
    font-size: 19px;
}

/* windows taskbar */
.taskbar {
    height: 60px;
    flex: none;
    display: flex;
    align-items: center;
    background: #1c1c1c;
    color: #fff;
    font-family: "Open Sans", sans-serif;
}
.start {
    width: 25px;
    height: 24px;
    margin-left: 23px;
}
.task-search {
    width: 431px;
    height: 60px;
    margin-left: 24px;
    display: flex;
    align-items: center;
    padding-left: 19px;
    background: #f2f2f2;
    border: 2px solid #c4c4c4;
    border-bottom: 3px solid #c4c4c4;
    color: #222;
    font-size: 21.500px;
}
.task-search > svg:first-child {
    width: 24px;
    height: 24px;
}
.task-search span {
    margin-left: 16px;
    padding-top: 4px;
}
.moth {
    width: 84px;
    height: 52px;
    margin-left: auto;
    margin-right: 14px;
}
.task-view {
    width: 24px;
    height: 40px;
    margin-left: 25px;
}
.task-app {
    width: 75px;
    height: 60px;
    display: flex;
    align-items: center;
    justify-content: center;
}
.task-app svg {
    height: 35px;
    width: 37px;
}
.task-on {
    background: linear-gradient(#76b9ed, #76b9ed) center bottom / 56px 3px no-repeat;
}
.task-active {
    background: #3f3f3f;
}
.app-mail { margin-left: 28px; }
.task-app.app-files svg { width: 33px; height: 30px; }
.task-app.app-word svg { width: 31px; height: 33px; }
.task-doc {
    margin-left: 242px;
    display: flex;
    align-items: center;
    gap: 17px;
    font-size: 20px;
}
.task-doc svg {
    width: 28px;
    height: 46px;
}
.tray {
    margin-left: 37px;
    display: flex;
    align-items: center;
}
.tray-up { width: 19px; height: 12px; }
.tray-meet { width: 16px; height: 24px; margin-left: 18px; }
.tray-cloud { width: 24px; height: 20px; margin-left: 17px; }
.tray-batt { width: 22px; height: 16px; margin-left: 14px; }
.tray-wifi { width: 18px; height: 20px; margin-left: 18px; }
.tray-vol { width: 20px; height: 22px; margin-left: 15px; }
.tray-lang {
    margin-left: 17px;
    font-size: 17px;
}
.clock {
    width: 110px;
    margin-left: 24px;
    display: flex;
    flex-direction: column;
    font-size: 17.500px;
    line-height: 28px;
    text-align: left;
}
.notif {
    position: relative;
}
.notif svg {
    width: 24px;
    height: 28px;
}
.notif-count {
    position: absolute;
    right: -12px;
    bottom: -6px;
    width: 24px;
    height: 24px;
    border: 1px solid #aaa;
    border-radius: 50%;
    background: #222;
    font-size: 16px;
    line-height: 22px;
    text-align: center;
}
```
